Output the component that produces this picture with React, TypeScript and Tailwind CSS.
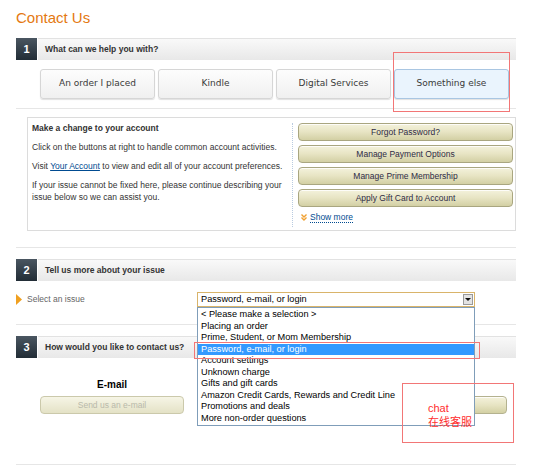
import { Fragment } from "react";

const topics = ["An order I placed", "Kindle", "Digital Services", "Something else"];

const accountActions = [
    "Forgot Password?",
    "Manage Payment Options",
    "Manage Prime Membership",
    "Apply Gift Card to Account",
];

const issues = [
    "< Please make a selection >",
    "Placing an order",
    "Prime, Student, or Mom Membership",
    "Password, e-mail, or login",
    "Account settings",
    "Unknown charge",
    "Gifts and gift cards",
    "Amazon Credit Cards, Rewards and Credit Line",
    "Promotions and deals",
    "More non-order questions",
];

const StepHeader = ({ num, title }: { num: number; title: string }) => (
    <div className="flex h-[22px] w-[500px]">
        <div className="flex w-[21px] items-center justify-center bg-linear-to-b from-[#4a5661] to-[#222d36] text-[11px] font-bold text-white">
            {num}
        </div>
        <div className="ml-px flex flex-1 items-center border-t border-[#e2e2e2] bg-linear-to-b from-[#f9f9f9] to-[#e8e8e8] pl-[7px] text-[8.5px] font-bold text-[#333]">
            {title}
        </div>
    </div>
);

const Divider = ({ className }: { className: string }) => (
    <div className={`w-[500px] border-t border-[#e6e6e6] ${className}`} />
);

const App = () => {
    const selected = "Something else";
    const highlighted = "Password, e-mail, or login";

    return (
        <div className="relative h-[473px] w-[536px] overflow-hidden bg-white pl-4 font-['Liberation_Sans',Arial,sans-serif] text-[#333]">
            <h1 className="h-[38px] pt-[9px] text-[15px] leading-[18px] text-[#e47911]">Contact Us</h1>

            <StepHeader num={1} title="What can we help you with?" />

            <div className="mt-[9px] flex gap-[3px] pl-6">
                {topics.map((topic) => (
                    <div
                        key={topic}
                        className={`flex h-[30px] w-[115px] items-center justify-center rounded-[3px] border font-['DejaVu_Sans',Verdana,sans-serif] text-[9px] text-[#3a3a3a] shadow-[0_1px_1px_rgba(0,0,0,0.12)] ${
                            topic === selected
                                ? "border-[#a9c6e2] bg-[#eaf4fd]"
                                : "border-[#d6d6d6] bg-linear-to-b from-[#fdfdfd] to-[#f0f0f0]"
                        }`}
                    >
                        {topic}
                    </div>
                ))}
            </div>

            <Divider className="mt-[9px]" />

            <div className="ml-[11px] mt-[8px] flex h-[114px] w-[489px] border border-[#dcdcdc]">
                <div className="w-[264px] pl-[4px] pt-[4px] text-[8.5px] leading-[12px] whitespace-nowrap">
                    <p className="font-bold">Make a change to your account</p>
                    <p className="mt-[7px]">Click on the buttons at right to handle common account activities.</p>
                    <p className="mt-[7px]">
                        Visit <a href="#" className="text-[#004b91] underline">Your Account</a> to view and edit all of your account preferences.
                    </p>
                    <p className="mt-[7px]">
                        If your issue cannot be fixed here, please continue describing your
                        <br />
                        issue below so we can assist you.
                    </p>
                </div>
                <div className="mb-[3px] mt-[5px] flex-1 border-l border-dotted border-[#b9cbe0] pl-[5px] pr-[2px]">
                    <div className="flex flex-col gap-[4px]">
                        {accountActions.map((action) => (
                            <div
                                key={action}
                                className="flex h-[18px] items-center justify-center rounded-[4px] border border-[#a9a680] bg-linear-to-b from-[#f4f2dc] via-[#e7e4c3] to-[#d3d0a4] text-[8.5px] text-[#2e2b45] shadow-[inset_0_1px_0_rgba(255,255,255,0.8)]"
                            >
                                {action}
                            </div>
                        ))}
                    </div>
                    <div className="mt-[4px] flex h-[12px] items-center pl-[3px] text-[8.5px]">
                        <svg width="6" height="7" viewBox="0 0 6 7" className="mr-[3px]">
                            <path d="M0.5 0.5 L3 3 L5.5 0.5 M0.5 3.5 L3 6 L5.5 3.5" stroke="#f0a030" strokeWidth="1.4" fill="none" />
                        </svg>
                        <span className="border-b border-dotted border-[#004b91] leading-[10px] text-[#004b91]">Show more</span>
                    </div>
                </div>
            </div>

            <Divider className="mt-[16px]" />

            <div className="mt-[11px]">
                <StepHeader num={2} title="Tell us more about your issue" />
            </div>

            <div className="mt-[11px] flex h-[15px] items-start">
                <div className="flex w-[181px] items-center pt-px text-[8.5px] text-[#666]">
                    <svg width="6" height="11" viewBox="0 0 6 11" className="mr-[5px]">
                        <path d="M0 0 L6 5.5 L0 11 Z" fill="#f0a020" />
                    </svg>
                    Select an issue
                </div>
                <div className="flex h-[15px] w-[278px] items-center justify-between border border-[#d9b46a] bg-white pl-[3px] text-[9.2px]">
                    <span className="text-black">{highlighted}</span>
                    <div className="mr-px flex h-[11px] w-[10px] items-center justify-center border border-[#9a9a9a] bg-[#e3e3e3]">
                        <svg width="6" height="5" viewBox="0 0 6 5">
                            <path d="M0 1 L6 1 L3 4 Z" fill="#111" />
                        </svg>
                    </div>
                </div>
            </div>

            <Divider className="mt-[17px]" />

            <div className="mt-[11px]">
                <StepHeader num={3} title="How would you like to contact us?" />
            </div>

            <div className="mt-[21px] flex w-[491px] justify-between pl-6">
                <div className="w-[144px]">
                    <div className="h-[12px] text-center text-[10px] font-bold leading-[12px] text-black">E-mail</div>
                    <div className="mt-[5px] flex h-[18px] items-center justify-center rounded-[4px] border border-[#cbc9ab] bg-linear-to-b from-[#f6f5e6] to-[#e4e2c6] text-[8.5px] text-[#b9b9aa]">
                        Send us an e-mail
                    </div>
                </div>
                {/* chat button, mostly hidden behind the open list */}
                <div className="w-[144px] pt-[17px]">
                    <div className="h-[18px] rounded-[4px] border border-[#b4b28f] bg-linear-to-b from-[#f4f2dc] via-[#e7e4c3] to-[#d3d0a4] shadow-[inset_0_1px_0_rgba(255,255,255,0.8)]" />
                </div>
            </div>

            <Divider className="mt-[50px]" />

            {/* open select list */}
            <ul className="absolute left-[197px] top-[307px] w-[278px] border border-[#7f9db9] bg-white py-px text-[9.2px] leading-[11.5px] text-black">
                {issues.map((issue) => (
                    <li
                        key={issue}
                        className={`pl-[3px] ${issue === highlighted ? "bg-[#3399ff] text-white" : ""}`}
                    >
                        {issue}
                    </li>
                ))}
            </ul>

            {/* red annotation boxes */}
            <div className="absolute left-[393px] top-[52px] h-[60px] w-[117px] border-[1.5px] border-[#f27676]" />
            <div className="absolute left-[194px] top-[342px] h-[17px] w-[286px] border-[1.5px] border-[#f27676]" />
            <div className="absolute left-[402px] top-[383px] h-[60px] w-[112px] border-[1.5px] border-[#f27676] pl-[25px] pt-[17px] font-['Liberation_Sans','Noto_Sans_CJK_SC',sans-serif] text-[11px] leading-[14px] text-[#ff2d2d]">
                {["chat", "在线客服"].map((line) => (
                    <Fragment key={line}>
                        {line}
                        <br />
                    </Fragment>
                ))}
            </div>
        </div>
    );
};

export default App;
